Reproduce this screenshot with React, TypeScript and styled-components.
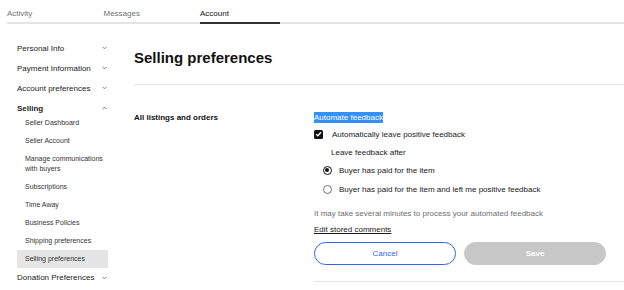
import React from "react";
import styled, { createGlobalStyle, css } from "styled-components";

const GlobalStyle = createGlobalStyle`
  * { box-sizing: border-box; }
  body {
    margin: 0;
    background: #fff;
    font-family: "Liberation Sans", Arial, sans-serif;
    color: #191919;
  }
`;

const Page = styled.div`
  width: 624px;
  height: 290px;
  overflow: hidden;
`;

const TabBar = styled.nav`
  display: flex;
  gap: 16.5px;
  margin-left: 7px;
  height: 24px;
  border-bottom: 2px solid #e3e3e3;
`;

const Tab = styled.div<{ $active?: boolean }>`
  width: 80px;
  height: 24px;
  padding-top: 9px;
  font-size: 8px;
  line-height: 10px;
  color: ${(p) => (p.$active ? "#111" : "#707070")};
  ${(p) =>
    p.$active &&
    css`
      border-bottom: 2px solid #333;
    `}
`;

const Main = styled.div`
  display: flex;
  padding-left: 17px;
`;

const Sidebar = styled.aside`
  width: 91px;
  flex: none;
  padding-top: 14px;
`;

const NavHeader = styled.div<{ $bold?: boolean }>`
  display: flex;
  align-items: center;
  justify-content: space-between;
  height: 20px;
  font-size: 8px;
  color: #222;
  font-weight: ${(p) => (p.$bold ? 700 : 400)};
  padding-right: 1px;
  white-space: nowrap;
`;

const SubList = styled.ul`
  list-style: none;
  margin: -4.5px 0 0;
  padding: 0;
`;

const SubItem = styled.li<{ $active?: boolean }>`
  padding: 4px 8px;
  font-size: 7px;
  line-height: 10px;
  color: #333;
  white-space: nowrap;
  background: ${(p) => (p.$active ? "#e5e5e5" : "transparent")};
`;

const ChevronSvg = styled.svg`
  flex: none;
  display: block;
`;

const Chevron = ({ up }: { up?: boolean }) => (
  <ChevronSvg width="5" height="4" viewBox="0 0 5 4">
    <path
      d={up ? "M0.6 3.2 L2.5 1.1 L4.4 3.2" : "M0.6 0.8 L2.5 2.9 L4.4 0.8"}
      fill="none"
      stroke="#777"
      strokeWidth="0.9"
    />
  </ChevronSvg>
);

const Content = styled.main`
  flex: 1;
  margin-left: 26px;
`;

const Title = styled.h1`
  margin: 25px 0 0;
  font-size: 15px;
  line-height: 18px;
  font-weight: 700;
  color: #111;
`;

const Divider = styled.hr`
  margin: 17px 0 0;
  border: 0;
  border-top: 1px solid #e5e5e5;
  height: 0;
`;

const Section = styled.section`
  display: flex;
  padding-top: 26.5px;
`;

const SectionLabel = styled.div`
  width: 180px;
  flex: none;
  font-size: 8px;
  line-height: 11px;
  font-weight: 700;
  color: #111;
`;

const SectionBody = styled.div`
  flex: 1;
  display: flex;
  flex-direction: column;
`;

const Highlight = styled.span`
  align-self: flex-start;
  display: inline-block;
  font-size: 8px;
  line-height: 11px;
  background: #3390ff;
  color: #fff;
`;

const CheckRow = styled.label`
  display: flex;
  align-items: center;
  gap: 9px;
  height: 12px;
  margin-top: 5.5px;
  font-size: 8px;
  color: #191919;
`;

const CheckBox = styled.span`
  width: 9px;
  height: 9px;
  border-radius: 1.5px;
  background: #111;
  display: flex;
  align-items: center;
  justify-content: center;
`;

const SubHeading = styled.div`
  margin-top: 6.5px;
  padding-left: 17px;
  font-size: 8px;
  line-height: 11px;
  color: #191919;
`;

const RadioRow = styled.label<{ $gap: number }>`
  display: flex;
  align-items: center;
  gap: 7.5px;
  height: 12px;
  margin-top: ${(p) => p.$gap}px;
  padding-left: 8.5px;
  font-size: 8px;
  color: #191919;
`;

const RadioCircle = styled.span<{ $checked?: boolean }>`
  width: 9px;
  height: 9px;
  border-radius: 50%;
  border: 1px solid ${(p) => (p.$checked ? "#111" : "#707070")};
  display: flex;
  align-items: center;
  justify-content: center;
  &::after {
    content: "";
    width: 4.5px;
    height: 4.5px;
    border-radius: 50%;
    background: ${(p) => (p.$checked ? "#111" : "transparent")};
  }
`;

const Note = styled.p`
  margin: 12.5px 0 0;
  font-size: 8px;
  line-height: 11px;
  color: #6e6e6e;
`;

const EditLink = styled.a`
  align-self: flex-start;
  margin-top: 5px;
  font-size: 8px;
  line-height: 11px;
  color: #191919;
  text-decoration: underline;
`;

const ButtonRow = styled.div`
  display: flex;
  gap: 8px;
  width: 292px;
  margin-top: 7.5px;
`;

const Button = styled.button<{ $primary?: boolean }>`
  flex: 1;
  height: 22.5px;
  border-radius: 12px;
  font-family: inherit;
  font-size: 8px;
  padding: 0;
  ${(p) =>
    p.$primary
      ? css`
          background: #c7c7c7;
          border: 1px solid #c7c7c7;
          color: #fff;
          font-weight: 700;
        `
      : css`
          background: #fff;
          border: 1px solid #3665f3;
          color: #3665f3;
        `}
`;

const BottomDivider = styled.hr`
  margin: 16.5px 0 0;
  border: 0;
  border-top: 1px solid #e5e5e5;
  height: 0;
`;

const topItems = ["Personal Info", "Payment Information", "Account preferences"];
const sellingItems = [
  "Seller Dashboard",
  "Seller Account",
  "Manage communications with buyers",
  "Subscriptions",
  "Time Away",
  "Business Policies",
  "Shipping preferences",
  "Selling preferences",
];

export default function App() {
  return (
    <Page>
      <GlobalStyle />
      <TabBar>
        <Tab>Activity</Tab>
        <Tab>Messages</Tab>
        <Tab $active>Account</Tab>
      </TabBar>
      <Main>
        <Sidebar>
          {topItems.map((t) => (
            <NavHeader key={t}>
              <span>{t}</span>
              <Chevron />
            </NavHeader>
          ))}
          <NavHeader $bold>
            <span>Selling</span>
            <Chevron up />
          </NavHeader>
          <SubList>
            {sellingItems.map((t) => (
              <SubItem key={t} $active={t === "Selling preferences"}>
                {t === "Manage communications with buyers" ? (
                  <>
                    Manage communications
                    <br />
                    with buyers
                  </>
                ) : (
                  t
                )}
              </SubItem>
            ))}
          </SubList>
          <NavHeader>
            <span>Donation Preferences</span>
            <Chevron />
          </NavHeader>
        </Sidebar>
        <Content>
          <Title>Selling preferences</Title>
          <Divider />
          <Section>
            <SectionLabel>All listings and orders</SectionLabel>
            <SectionBody>
              <Highlight>Automate feedback</Highlight>
              <CheckRow>
                <CheckBox>
                  <svg width="7" height="6" viewBox="0 0 7 6">
                    <path d="M1 3.1 L2.8 4.8 L6 1.2" fill="none" stroke="#fff" strokeWidth="1.3" />
                  </svg>
                </CheckBox>
                Automatically leave positive feedback
              </CheckRow>
              <SubHeading>Leave feedback after</SubHeading>
              <RadioRow $gap={6.5}>
                <RadioCircle $checked />
                Buyer has paid for the item
              </RadioRow>
              <RadioRow $gap={7}>
                <RadioCircle />
                Buyer has paid for the item and left me positive feedback
              </RadioRow>
              <Note>It may take several minutes to process your automated feedback</Note>
              <EditLink>Edit stored comments</EditLink>
              <ButtonRow>
                <Button>Cancel</Button>
                <Button $primary>Save</Button>
              </ButtonRow>
              <BottomDivider />
            </SectionBody>
          </Section>
        </Content>
      </Main>
    </Page>
  );
}
